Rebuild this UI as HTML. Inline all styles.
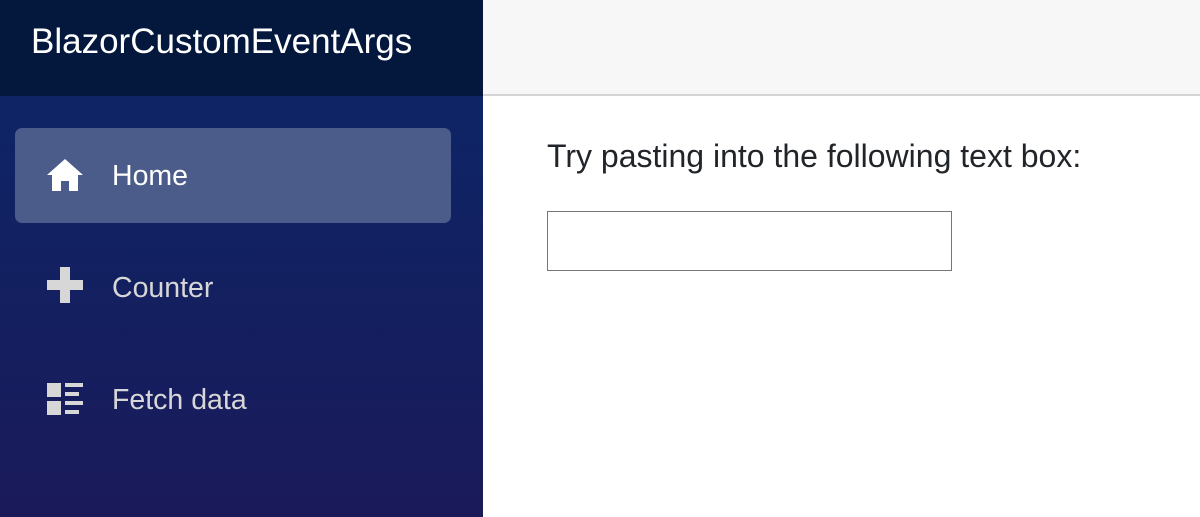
<!DOCTYPE html>
<html><head><style>
html,body{margin:0;padding:0;width:1200px;height:517px;overflow:hidden;font-family:"Liberation Sans",Arial,sans-serif;}
.side{position:absolute;left:0;top:0;width:483px;height:517px;background:linear-gradient(180deg,#0b2768 0%,#1a1a5a 100%);}
.top{position:absolute;left:0;top:0;width:483px;height:96px;background:#04183e;}
.title{position:absolute;left:31px;top:22px;color:#fff;font-size:35px;line-height:40px;}
.hdr{position:absolute;left:483px;top:0;width:717px;height:94px;background:#f7f7f7;border-bottom:2px solid #d6d5d5;}
.item{position:absolute;left:15px;width:436px;height:95px;border-radius:7px;color:#d7d7d7;font-size:28.5px;}
.item.act{background:#4b5c8a;color:#fff;}
.item span{position:absolute;left:97px;top:32px;line-height:32px;}
.item svg{position:absolute;left:32px;}
.msg{position:absolute;left:547px;top:138px;font-size:32px;color:#212529;line-height:36px;}
.inp{position:absolute;left:547px;top:211px;width:403px;height:58px;border:1px solid #767676;background:#fff;}
</style></head><body>
<div class="side"></div>
<div class="top"><div class="title">BlazorCustomEventArgs</div></div>
<div class="hdr"></div>
<div class="item act" style="top:128px">
<svg style="top:31px" width="36" height="32" viewBox="0 0 36 32"><path d="M18 0 L36 16 L31 16 L31 32 L22 32 L22 22 L14 22 L14 32 L5 32 L5 16 L0 16 Z" fill="#fff"/></svg>
<span>Home</span></div>
<div class="item" style="top:240px">
<svg style="top:27px" width="36" height="36" viewBox="0 0 36 36"><path d="M13 0h10v13h13v10H23v13H13V23H0V13h13z" fill="#d7d7d7"/></svg>
<span>Counter</span></div>
<div class="item" style="top:352px">
<svg style="top:31px" width="36" height="32" viewBox="0 0 36 32" fill="#d7d7d7"><rect x="0" y="0" width="14" height="14"/><rect x="0" y="18" width="14" height="14"/><rect x="18" y="0" width="18" height="4"/><rect x="18" y="9" width="14" height="4"/><rect x="18" y="18" width="18" height="4"/><rect x="18" y="27" width="14" height="4"/></svg>
<span>Fetch data</span></div>
<div class="msg">Try pasting into the following text box:</div>
<div class="inp"></div>
</body></html>
